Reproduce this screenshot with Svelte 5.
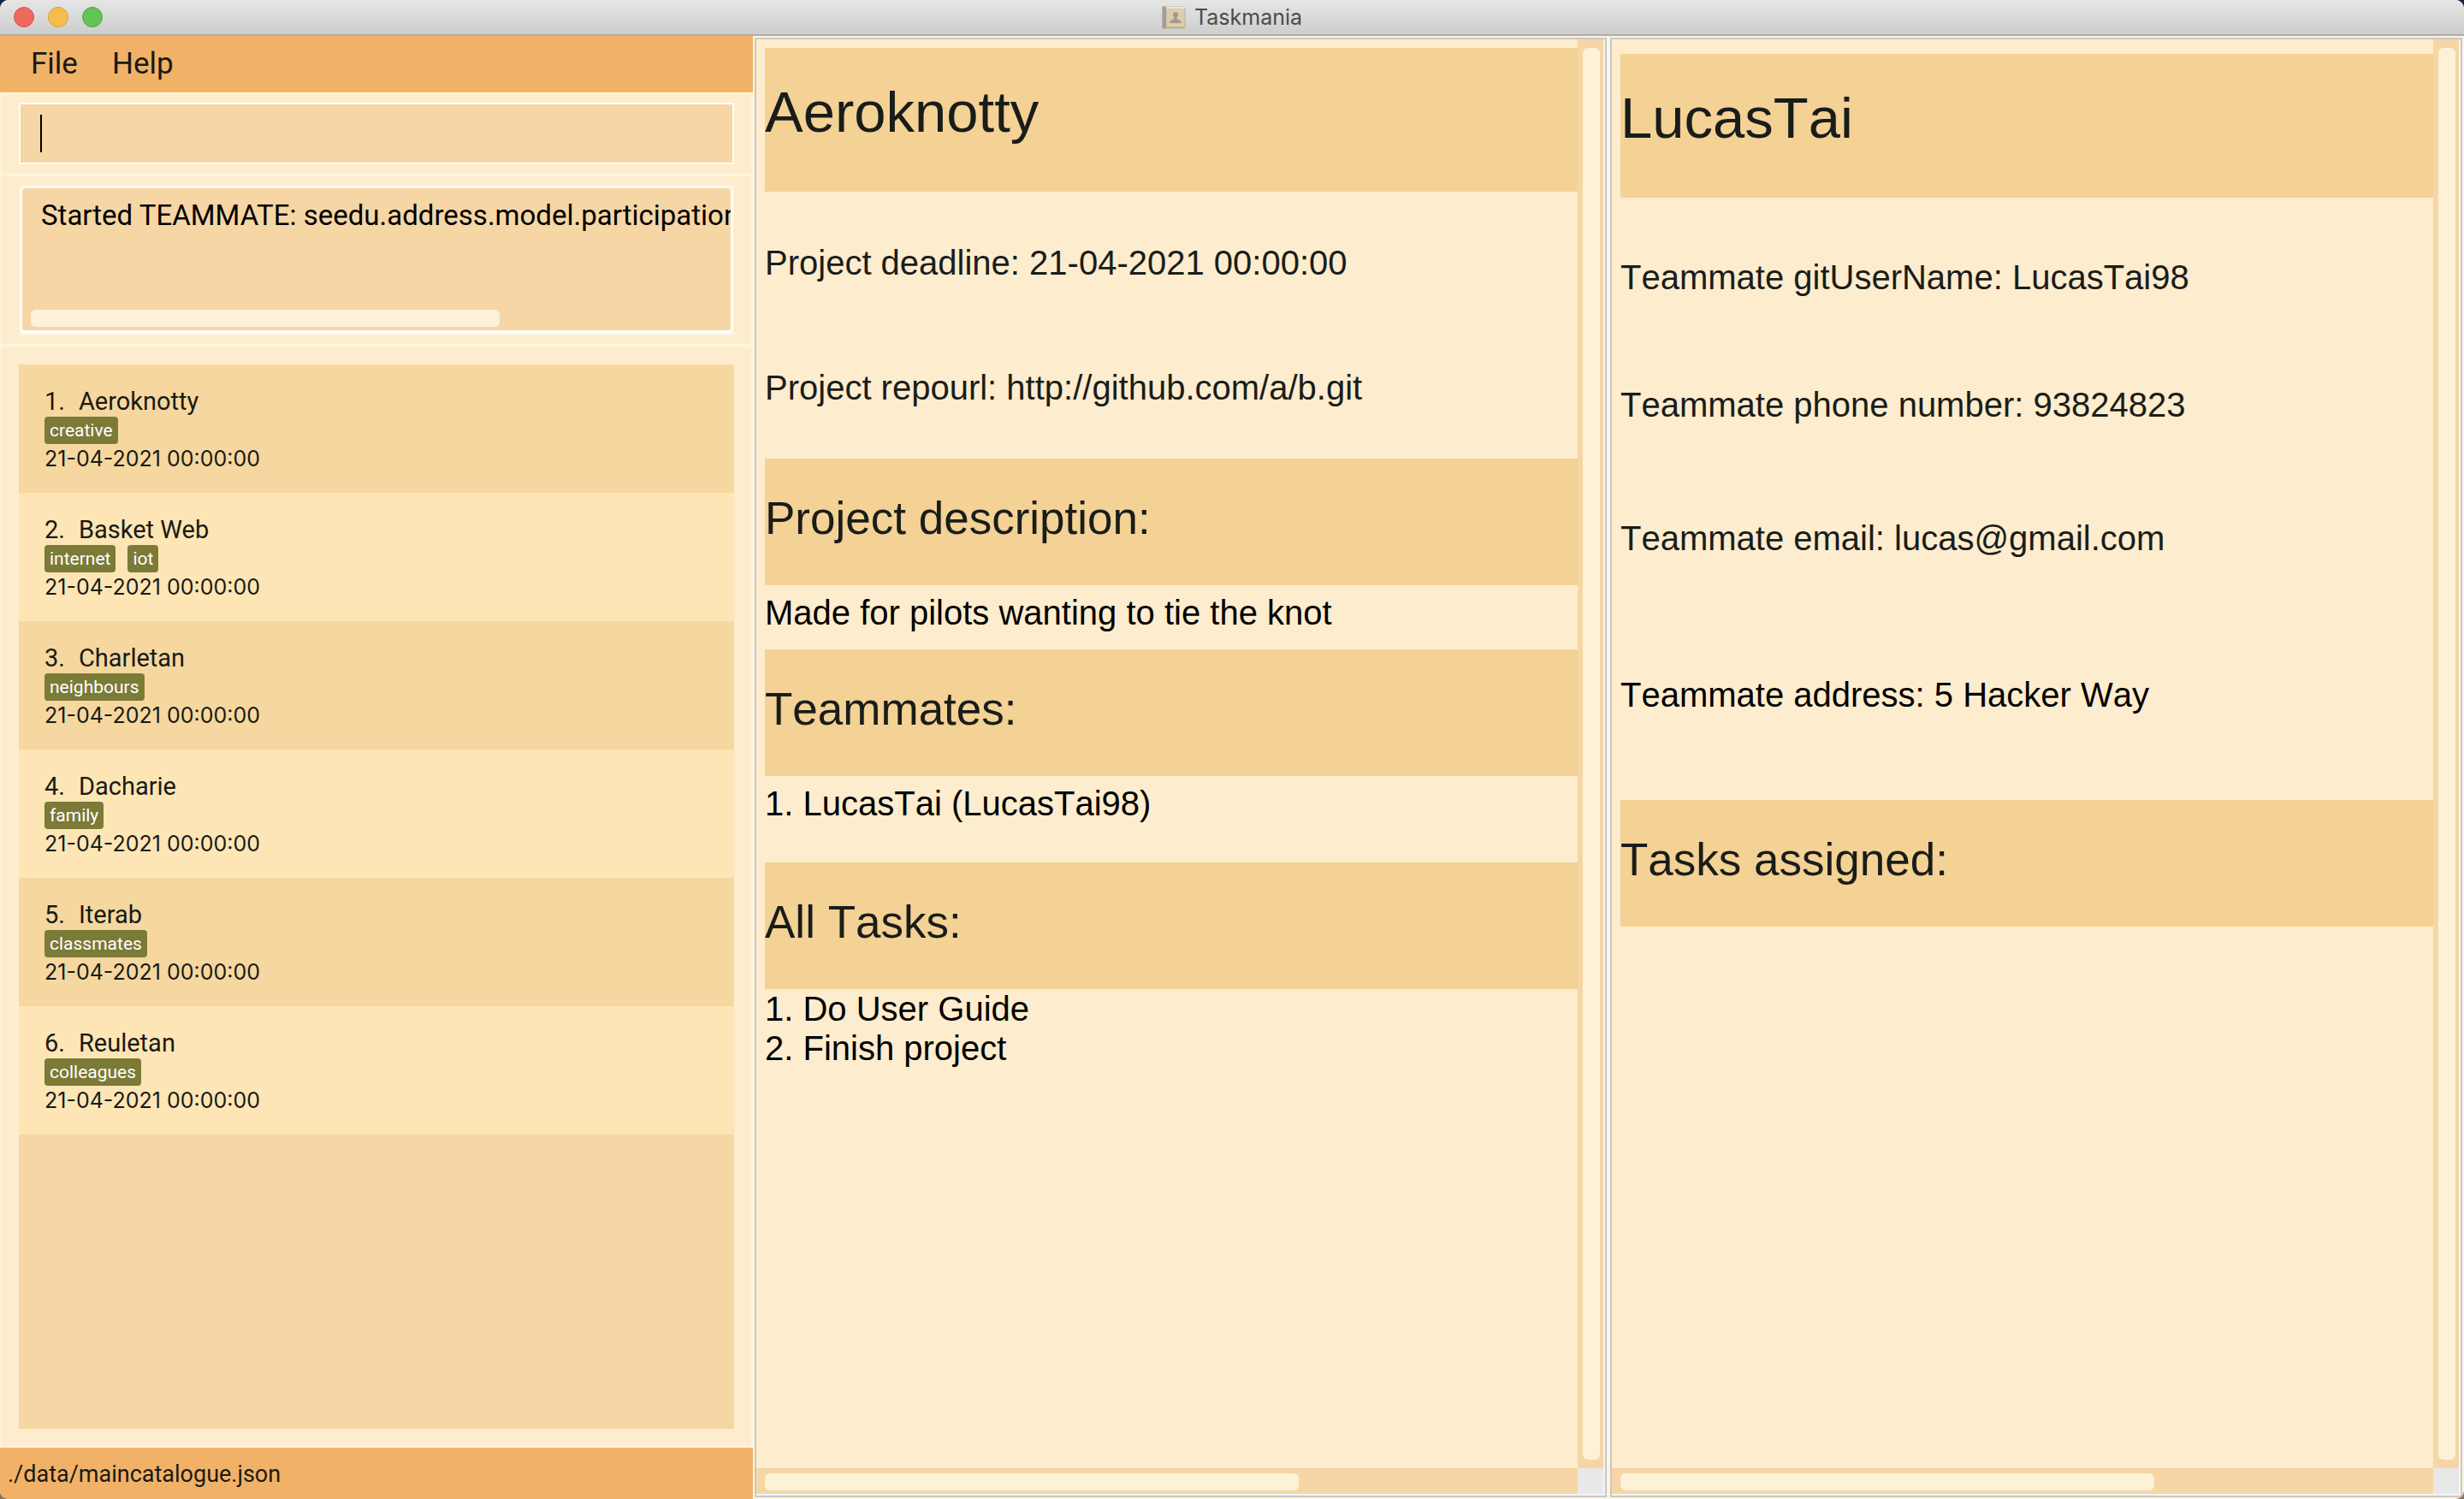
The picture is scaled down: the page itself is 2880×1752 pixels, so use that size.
<script>
  const projects = [
    { name: 'Aeroknotty', tags: ['creative'] },
    { name: 'Basket Web', tags: ['internet', 'iot'] },
    { name: 'Charletan', tags: ['neighbours'] },
    { name: 'Dacharie', tags: ['family'] },
    { name: 'Iterab', tags: ['classmates'] },
    { name: 'Reuletan', tags: ['colleagues'] }
  ];
  const deadline = '21-04-2021 00:00:00';
  let command = $state('');
</script>

<div class="window">
  <header class="titlebar">
    <div class="lights">
      <button class="light close" aria-label="Close"></button>
      <button class="light minimise" aria-label="Minimise"></button>
      <button class="light zoom" aria-label="Zoom"></button>
    </div>
    <div class="title">
      <svg class="book" viewBox="0 0 28 27" aria-hidden="true">
        <rect x="0.5" y="0.5" width="27" height="26" rx="1.5" fill="#b9aea0" />
        <rect x="0.5" y="0.5" width="4.5" height="26" rx="1.5" fill="#a39c9a" />
        <rect x="5" y="1" width="22" height="2" fill="#ebe5d8" />
        <rect x="5.5" y="3" width="21" height="21.5" fill="#dccdaf" />
        <rect x="5.5" y="24" width="21.5" height="2" fill="#c9b284" />
        <path d="M16 7c-2 0-3.200 1.500-3 3.500.1 1.500.8 2.300 1.300 3 .4 1.300-.3 2-1.700 2.500-2 .7-3.300 1.300-3.400 4h13.600c-.1-2.700-1.400-3.300-3.400-4-1.400-.5-2.100-1.200-1.700-2.500.5-.7 1.200-1.500 1.300-3C19.200 8.500 18 7 16 7z" fill="#a39a8f" />
      </svg>
      <span>Taskmania</span>
    </div>
  </header>

  <main class="columns">
    <section class="side">
      <nav class="menubar">
        <button>File</button>
        <button>Help</button>
      </nav>

      <div class="pane">
        <label class="command">
          <span class="caret"></span>
          <input type="text" aria-label="Command" bind:value={command} />
        </label>
      </div>

      <div class="pane">
        <div class="result-frame">
          <div class="result">
            <p>Started TEAMMATE: seedu.address.model.participation</p>
            <div class="result-thumb"></div>
          </div>
        </div>
      </div>

      <div class="pane list-pane">
        <ol class="projects">
          {#each projects as project, i}
            <li>
              <div class="name"><span>{i + 1}.</span><span>{project.name}</span></div>
              <div class="tags">
                {#each project.tags as tag}<span class="tag">{tag}</span>{/each}
              </div>
              <div class="date">{deadline}</div>
            </li>
          {/each}
        </ol>
      </div>

      <footer class="status">./data/maincatalogue.json</footer>
    </section>

    <section class="details">
      <article class="scroller">
        <div class="content project">
          <h1>Aeroknotty</h1>
          <p class="soft deadline">Project deadline: {deadline}</p>
          <p class="soft repo">Project repourl: http://github.com/a/b.git</p>
          <h2>Project description:</h2>
          <p class="description">Made for pilots wanting to tie the knot</p>
          <h2>Teammates:</h2>
          <p class="members">1. LucasTai (LucasTai98)</p>
          <h2>All Tasks:</h2>
          <p>1. Do User Guide</p>
          <p>2. Finish project</p>
        </div>
        <div class="track vertical"><div class="thumb"></div></div>
        <div class="track horizontal"><div class="thumb"></div></div>
        <div class="corner"></div>
      </article>

      <article class="scroller">
        <div class="content teammate">
          <h1>LucasTai</h1>
          <p class="soft git">Teammate gitUserName: LucasTai98</p>
          <p class="soft phone">Teammate phone number: 93824823</p>
          <p class="soft email">Teammate email: lucas@gmail.com</p>
          <p class="address">Teammate address: 5 Hacker Way</p>
          <h2>Tasks assigned:</h2>
        </div>
        <div class="track vertical"><div class="thumb"></div></div>
        <div class="track horizontal"><div class="thumb"></div></div>
        <div class="corner"></div>
      </article>
    </section>
  </main>
</div>

<style>
  :global(body) {
    background: linear-gradient(#1b2444, #8f7558);
  }

  .window {
    display: flex;
    flex-direction: column;
    min-height: 100vh;
    background: #fff4dc;
    border-radius: 10px;
    overflow: hidden;
    color: #191a14;
    font-family: Roboto, 'Liberation Sans', sans-serif;
  }

  button {
    border: 0;
    padding: 0;
    background: none;
    font: inherit;
    color: inherit;
  }

  h1,
  h2,
  p,
  ol {
    margin: 0;
    padding: 0;
    font-weight: 400;
  }

  .titlebar {
    display: grid;
    grid-template-columns: 1fr auto 1fr;
    align-items: center;
    box-sizing: border-box;
    height: 42px;
    border-bottom: 2px solid #adadad;
    background: linear-gradient(#e6e6e6, #cdcdcd);
  }

  .lights {
    display: flex;
    gap: 16px;
    padding-left: 16px;
  }

  .light {
    width: 24px;
    height: 24px;
    border-radius: 50%;
    border: 1px solid;
  }

  .close {
    background: #ee6a5f;
    border-color: #d3554b;
  }

  .minimise {
    background: #f5bd4f;
    border-color: #d9a13c;
  }

  .zoom {
    background: #61c454;
    border-color: #4fa73f;
  }

  .title {
    display: flex;
    align-items: center;
    gap: 10px;
    font-family: Inter, 'Liberation Sans', sans-serif;
    font-size: 25px;
    line-height: 32px;
    color: #4b4b4b;
  }

  .book {
    width: 28px;
    height: 27px;
  }

  .columns {
    flex: 1;
    display: grid;
    grid-template-columns: 880fr 2000fr;
  }

  .side {
    display: flex;
    flex-direction: column;
    min-width: 0;
  }

  .menubar {
    display: flex;
    gap: 40px;
    height: 66px;
    padding-left: 36px;
    background: #f1b268;
    font-size: 35px;
    line-height: 66px;
  }

  .pane {
    border: 2px solid #fff4dc;
    background: #fdeccd;
    padding: 10px 20px;
  }

  .command {
    display: flex;
    align-items: center;
    height: 68px;
    padding-left: 23px;
    border: 2px solid #fff;
    background: #f6d6a5;
  }

  .caret {
    width: 2px;
    height: 44px;
    background: #000;
  }

  .command input {
    flex: 1;
    min-width: 0;
    border: 0;
    padding: 0;
    outline: 0;
    background: none;
    font: inherit;
    font-size: 33px;
  }

  .result-frame {
    border: 2px solid #fff4dc;
    background: #fff4dc;
  }

  .result {
    display: flex;
    flex-direction: column;
    justify-content: space-between;
    height: 162px;
    padding: 0 0 4px 10px;
    border: 2px solid #fff;
    border-bottom-width: 4px;
    border-radius: 6px;
    background: #f6d6a5;
    overflow: hidden;
  }

  .result p {
    padding: 10px 0 0 12px;
    font-size: 33px;
    line-height: 44px;
    color: #000;
    white-space: nowrap;
    overflow: hidden;
  }

  .result-thumb {
    width: 67%;
    height: 20px;
    border-radius: 6px;
    background: #fdf2d8;
  }

  .list-pane {
    flex: 1;
    display: flex;
    padding: 20px;
  }

  .projects {
    flex: 1;
    list-style: none;
    background: #f6d6a5;
  }

  .projects li {
    box-sizing: border-box;
    height: 150px;
    padding: 25px 30px 0;
    background: #f6d79f;
  }

  .projects li:nth-child(even) {
    background: #fee5b5;
  }

  .name {
    display: flex;
    gap: 16px;
    font-size: 29px;
    line-height: 36px;
  }

  .tags {
    display: flex;
    gap: 14px;
  }

  .tag {
    padding: 0 6px;
    border-radius: 4px;
    background: #7b7a37;
    color: #fff;
    font-size: 21px;
    line-height: 32px;
  }

  .date {
    font-family: Inter, 'Liberation Sans', sans-serif;
    font-size: 25px;
    line-height: 34px;
  }

  .status {
    height: 60px;
    padding-left: 9px;
    background: #f1b268;
    font-size: 27px;
    line-height: 62px;
  }

  .details {
    display: grid;
    grid-template-columns: 1fr 1fr;
    gap: 4px;
    padding: 2px;
    font-family: 'Liberation Sans', sans-serif;
    font-kerning: none;
  }

  .scroller {
    display: grid;
    grid-template-columns: 1fr 30px;
    grid-template-rows: 1fr 30px;
    border: 2px solid #c8c8c8;
    padding: 0 2px 2px 0;
    background: #f4f4f4;
  }

  .content {
    padding-left: 10px;
    background: #fdeccd;
    font-size: 40px;
    line-height: 46px;
    color: #000;
  }

  .content h1 {
    padding: 37px 0 55px;
    background: #f4d194;
    font-size: 67px;
    line-height: 76px;
    color: #191d1a;
  }

  .content h2 {
    padding: 40px 0 48px;
    background: #f4d194;
    font-size: 53px;
    line-height: 60px;
    color: #191d1a;
  }

  .soft {
    color: #191d1a;
  }

  .project {
    padding-top: 10px;
  }

  .teammate {
    padding-top: 17px;
  }

  .deadline {
    padding: 60px 0 50px;
  }

  .repo {
    padding: 50px 0 60px;
  }

  .description {
    padding: 9px 0 20px;
  }

  .members {
    padding: 9px 0 46px;
  }

  .git {
    padding: 70px 0 52px;
  }

  .phone {
    padding: 51px 0 54px;
  }

  .email {
    padding: 56px 0 68px;
  }

  .address {
    padding: 69px 0 100px;
  }

  .track {
    background: #f6d6a5;
  }

  .thumb {
    border-radius: 6px;
    background: #fdf2d8;
  }

  .vertical {
    display: flex;
    padding: 10px 4px 10px 6px;
  }

  .vertical .thumb {
    flex: 1;
  }

  .horizontal {
    padding: 6px 10px 4px;
  }

  .horizontal .thumb {
    width: 66.4%;
    height: 20px;
  }

  .corner {
    background: #e8e8e8;
  }
</style>
